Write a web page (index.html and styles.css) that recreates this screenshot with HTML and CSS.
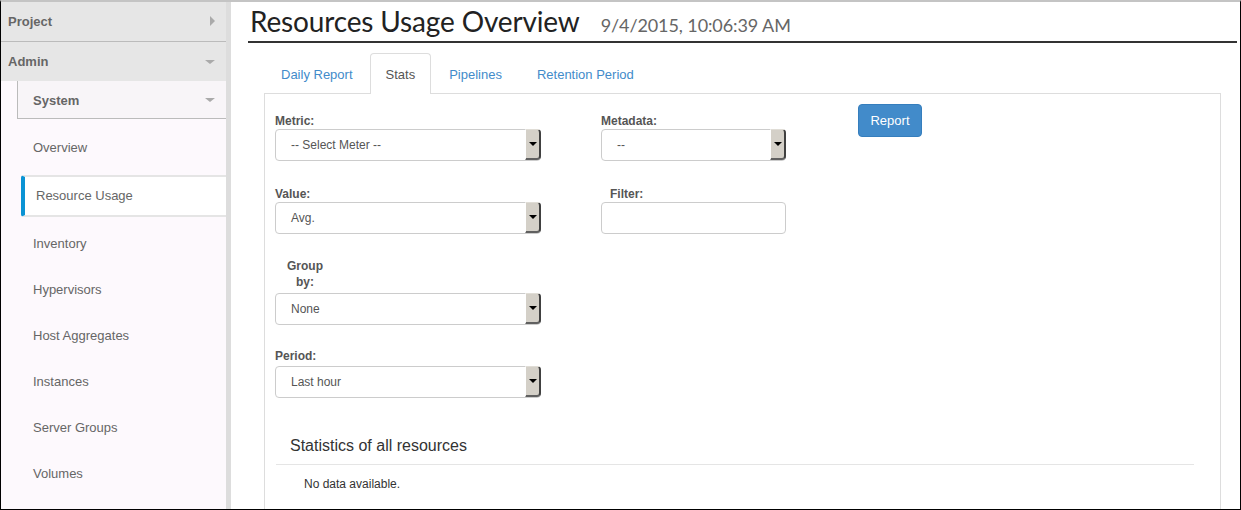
FILE: index.html
```html
<!DOCTYPE html>
<html>
<head>
<meta charset="utf-8">
<link rel="stylesheet" href="styles.css">
</head>
<body>
<div class="frame">
  <aside class="sidebar">
    <div class="dash">Project<span class="tri-right"></span></div>
    <div class="dash dash-open">Admin<span class="tri-down"></span></div>
    <div class="panelhead">System<span class="tri-down"></span></div>
    <ul class="nav">
      <li>Overview</li>
      <li class="active">Resource Usage</li>
      <li>Inventory</li>
      <li>Hypervisors</li>
      <li>Host Aggregates</li>
      <li>Instances</li>
      <li>Server Groups</li>
      <li>Volumes</li>
    </ul>
  </aside>
  <div class="strip"></div>
  <main class="main">
    <header class="pagehead">
      <h1 class="title">Resources Usage Overview</h1>
      <span class="date">9/4/2015, 10:06:39 AM</span>
    </header>
    <nav class="tabs">
      <a class="tab">Daily Report</a>
      <a class="tab current">Stats</a>
      <a class="tab">Pipelines</a>
      <a class="tab">Retention Period</a>
    </nav>
    <section class="pane">
      <div class="form">
        <div class="col col-a">
          <div class="field">
            <label class="lbl">Metric:</label>
            <div class="select"><span class="val">-- Select Meter --</span><span class="btn"><i></i></span></div>
          </div>
          <div class="field">
            <label class="lbl">Value:</label>
            <div class="select"><span class="val">Avg.</span><span class="btn"><i></i></span></div>
          </div>
          <div class="field field-group">
            <label class="lbl lbl-group">Group<br>by:</label>
            <div class="select"><span class="val">None</span><span class="btn"><i></i></span></div>
          </div>
          <div class="field field-last">
            <label class="lbl lbl-period">Period:</label>
            <div class="select"><span class="val">Last hour</span><span class="btn"><i></i></span></div>
          </div>
        </div>
        <div class="col col-b">
          <div class="field">
            <label class="lbl">Metadata:</label>
            <div class="select"><span class="val">--</span><span class="btn"><i></i></span></div>
          </div>
          <div class="field">
            <label class="lbl lbl-filter">Filter:</label>
            <div class="input"></div>
          </div>
        </div>
        <div class="col col-c">
          <button class="report">Report</button>
        </div>
      </div>
      <div class="stats">
        <h3 class="stats-title">Statistics of all resources</h3>
        <p class="nodata">No data available.</p>
      </div>
    </section>
  </main>
</div>
</body>
</html>
```

FILE: styles.css
```css
* { box-sizing: border-box; }
html, body { margin: 0; padding: 0; }
body {
  width: 1241px;
  height: 510px;
  overflow: hidden;
  background: #fff;
  font-family: "Liberation Sans", Arial, sans-serif;
}
.frame {
  display: flex;
  width: 1241px;
  height: 510px;
  border-left: 1px solid #000;
  border-right: 1px solid #000;
  border-bottom: 1px solid #000;
  border-top: 2px solid #c4c4c4;
  overflow: hidden;
}
.sidebar {
  width: 225px;
  flex: none;
  background: #fdf9fd;
}
.strip {
  width: 5px;
  flex: none;
  background: #dddddd;
}
.dash {
  position: relative;
  height: 40px;
  line-height: 39px;
  padding-left: 7px;
  background: #e6e6e6;
  font-weight: bold;
  font-size: 13px;
  color: #666;
  border-bottom: 1px solid #bbb;
}
.dash-open {
  border-bottom: none;
  height: 39px;
  padding-top: 1px;
  line-height: 38px;
}
.tri-right {
  position: absolute;
  right: 11px;
  top: 14px;
  width: 0; height: 0;
  border-top: 5px solid transparent;
  border-bottom: 5px solid transparent;
  border-left: 5px solid #aaa;
}
.tri-down {
  position: absolute;
  right: 11px;
  top: 18px;
  width: 0; height: 0;
  border-left: 5px solid transparent;
  border-right: 5px solid transparent;
  border-top: 4px solid #aaa;
}
.panelhead {
  position: relative;
  margin-left: 16px;
  height: 38px;
  padding-top: 1px;
  line-height: 37px;
  padding-left: 15px;
  background: #f8f5f8;
  border-left: 1px solid #bbb;
  border-bottom: 1px solid #bbb;
  font-weight: bold;
  font-size: 13px;
  color: #666;
}
.panelhead .tri-down { top: 17px; }
.nav {
  list-style: none;
  margin: 6px 0 0;
  padding: 0;
}
.nav li {
  height: 46px;
  line-height: 46px;
  padding-left: 32px;
  font-size: 13px;
  color: #666;
}
.nav li.active {
  height: 42px;
  line-height: 38px;
  margin: 4px 0 4px 20px;
  padding-left: 11px;
  background: #fff;
  border-top: 2px solid #e5e5e5;
  border-bottom: 2px solid #e5e5e5;
  border-left: 4px solid #0a93d4;
  border-radius: 3px 0 0 3px;
}
.main {
  flex: 1;
  min-width: 0;
  padding: 0 3px 0 17px;
}
.pagehead {
  display: flex;
  align-items: baseline;
  height: 41px;
  border-bottom: 2px solid #333;
  padding-left: 2px;
}
.title {
  margin: 0;
  font-family: Lato, "Open Sans", sans-serif;
  font-weight: normal;
  font-size: 28px;
  line-height: 38px;
  letter-spacing: -0.15px;
  color: #222;
}
.date {
  margin-left: 21px;
  font-family: Lato, "Open Sans", sans-serif;
  font-size: 18px;
  letter-spacing: -0.1px;
  color: #666;
}
.tabs {
  display: flex;
  margin: 10px 0 0 16px;
  height: 40px;
}
.tab {
  display: block;
  padding: 0 16px;
  margin-right: 1px;
  line-height: 41px;
  font-size: 13px;
  color: #428bca;
  border: 1px solid transparent;
  border-bottom: none;
  border-radius: 4px 4px 0 0;
}
.tab.current {
  color: #555;
  background: #fff;
  border-color: #ddd;
  position: relative;
  z-index: 1;
  height: 41px;
  padding: 0 15px;
  margin-left: -1px;
}
.pane {
  margin: 0 16px 0 16px;
  border: 1px solid #ddd;
  border-bottom: none;
  height: 420px;
  padding: 10px 10px 0 10px;
}
.form {
  display: flex;
}
.col-a { width: 266px; padding-top: 8px; }
.col-b { width: 185px; margin-left: 60px; padding-top: 8px; }
.col-c { margin-left: 72px; }
.field { margin-bottom: 24px; }
.field-group { margin-bottom: 22px; }
.field-last { margin-bottom: 0; }
.lbl {
  display: block;
  font-weight: bold;
  font-size: 12px;
  line-height: 16px;
  padding-top: 1px;
  color: #555;
  margin-bottom: 0;
}
.lbl-group {
  width: 60px;
  text-align: center;
  padding-top: 0;
  margin-bottom: 3px;
}
.lbl-period { margin-bottom: 2px; }
.lbl-filter { padding-left: 9px; }
.select, .input {
  position: relative;
  height: 32px;
  border: 1px solid #ccc;
  border-radius: 4px;
  background: #fff;
}
.val {
  display: block;
  padding-left: 15px;
  line-height: 30px;
  font-size: 12px;
  color: #555;
}
.btn {
  position: absolute;
  right: -1px;
  top: -1px;
  width: 16px;
  height: 31px;
  background: #d4d0c8;
  border-top: 1px solid #e0ddd6;
  border-left: 1px solid #fff;
  border-right: 2px solid #404040;
  border-bottom: 2px solid #606060;
  border-radius: 0 4px 4px 0;
}
.btn i {
  position: absolute;
  left: 3px;
  top: 12px;
  width: 0; height: 0;
  border-left: 4px solid transparent;
  border-right: 4px solid transparent;
  border-top: 4px solid #000;
}
.report {
  display: block;
  width: 64px;
  height: 33px;
  border: 1px solid #357ebd;
  border-radius: 4px;
  background: #428bca;
  color: #fff;
  font-family: "Liberation Sans", Arial, sans-serif;
  font-size: 13px;
  padding: 0;
}
.stats {
  margin: 38px 16px 0 1px;
}
.stats-title {
  margin: 0;
  padding: 0 0 8px 14px;
  font-weight: normal;
  font-size: 16px;
  line-height: 20px;
  color: #333;
  border-bottom: 1px solid #e5e5e5;
}
.nodata {
  margin: 12px 0 0 28px;
  font-size: 12px;
  color: #333;
}
```
